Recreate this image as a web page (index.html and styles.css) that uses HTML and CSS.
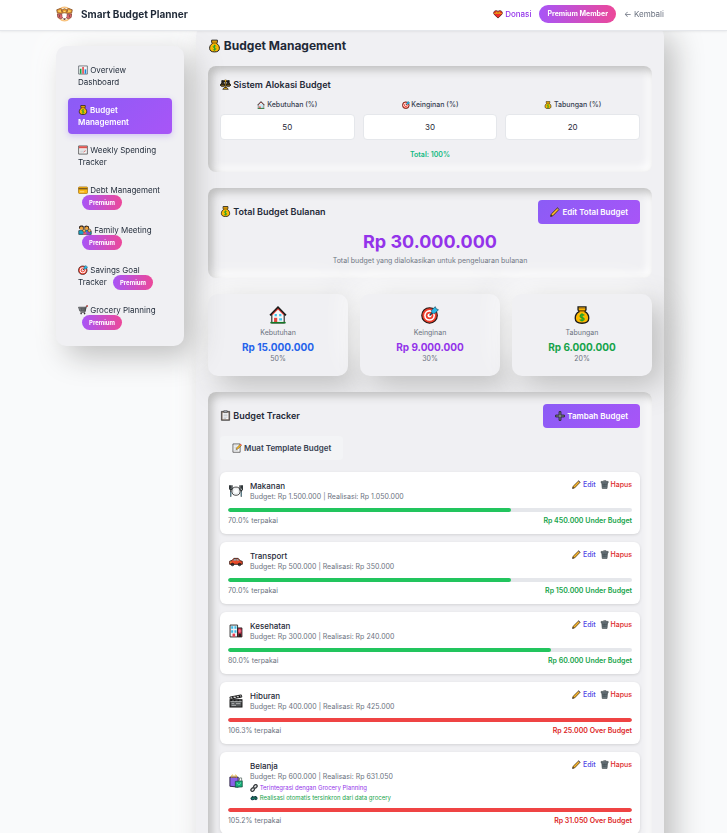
FILE: index.html
```html
<!DOCTYPE html>
<html lang="id">
<head>
<meta charset="utf-8">
<meta name="viewport" content="width=device-width, initial-scale=1">
<title>Smart Budget Planner</title>
<link rel="stylesheet" href="styles.css">
</head>
<body>
<svg class="sprite" aria-hidden="true">
  <symbol id="bag" viewBox="0 0 16 16"><path d="M4.500 .8h7v2.600L10.600 5C13 6.300 14 8.500 14 10.800 14 13.800 12 15.300 8 15.300S2 13.800 2 10.800C2 8.500 3 6.300 5.400 5L4.500 3.400z" fill="#fdb900" stroke="#1b1b1b" stroke-width="1.200"/><path d="M5 4.300h6" stroke="#7a4a00" stroke-width="1.200"/><path d="M5.300 2.200h5.400" stroke="#c98a10"/><path d="M10 8.300C9.500 7.500 6.300 7.300 6.300 9s3.600 1 3.600 2.600-3.200 1.500-3.900.400M8 6.500v7.200" fill="none" stroke="#16a32a" stroke-width="1.100"/></symbol>
  <symbol id="chart" viewBox="0 0 16 16"><path d="M1 1.500h14v13H1z" fill="#f4f6f8" stroke="#555c63" stroke-width="1.200"/><path d="M3 6h2.600v8H3z" fill="#16a34a"/><path d="M6.800 3h2.600v11H6.800z" fill="#e5484d"/><path d="M10.600 7h2.600v7h-2.600z" fill="#1688d8"/></symbol>
  <symbol id="calendar" viewBox="0 0 16 16"><path d="M1 1.500h14v13H1z" fill="#f5f5f5" stroke="#444" stroke-width="1.200"/><path d="M1.500 2h13v3.200h-13z" fill="#e0524c"/><path d="M3.500 8h9M3.500 10.300h9M3.500 12.500h4" stroke="#b4babf" stroke-width=".9"/><path d="M9 12l3-3.500" stroke="#e8433f"/></symbol>
  <symbol id="card" viewBox="0 0 16 16"><rect x=".8" y="3" width="14.400" height="10.500" rx="1.300" fill="#fcb813" stroke="#9a6500"/><path d="M1 5h14v2H1z" fill="#6b5020"/><path d="M3 10.800h7" stroke="#fff0b8"/></symbol>
  <symbol id="family" viewBox="0 0 22 16"><path d="M1 15V9l3-1 4 1 3-1h5l5 2v5z" fill="#16a5c7" stroke="#222"/><path d="M8 15l1-4h4l1 4z" fill="#f04f79"/><path d="M14 15V9l5 1v5z" fill="#7e4bd0"/><path d="M1.500 6V2.500L4 .8h3L9 2v5zM10 6V2l3-1.300L17 2l1 5z" fill="#2c2018"/><circle cx="5.300" cy="5" r="2.600" fill="#efa33a"/><circle cx="13.700" cy="5" r="2.600" fill="#efa33a"/><circle cx="9.600" cy="9" r="2.400" fill="#f8b84e" stroke="#222" stroke-width=".8"/><circle cx="18" cy="9" r="2.400" fill="#f8b84e" stroke="#222" stroke-width=".8"/></symbol>
  <symbol id="target" viewBox="0 0 16 16"><circle cx="7.600" cy="8.400" r="6.900" fill="#ee3e2c" stroke="#241816" stroke-width="1"/><circle cx="7.600" cy="8.400" r="4.800" fill="#fff"/><circle cx="7.600" cy="8.400" r="3.400" fill="#ee3e2c"/><circle cx="7.600" cy="8.400" r="1.800" fill="#fff"/><path d="M7.600 8.400l4-4" stroke="#153a4a" stroke-width="1.300"/><path d="M9.500 6.500V3.500L12.700.6l.8 1.900 2 .8-3 3.200z" fill="#28b9e8" stroke="#164c61" stroke-width=".6"/></symbol>
  <symbol id="cart" viewBox="0 0 16 16"><path d="M15.500 1.500h-2L11 11.500H4" fill="none" stroke="#333" stroke-width="1.400"/><path d="M.8 3.500h11.700l-1.400 6.300H3z" fill="#8b9298" stroke="#333"/><path d="M3 5.500h9M3 7.700h8.500M5 4l1 6M8 4v6M10.500 4l-1 6" stroke="#444" stroke-width=".8"/><circle cx="5" cy="13.700" r="1.300" fill="#333"/><circle cx="10.500" cy="13.700" r="1.300" fill="#333"/><circle cx="14.700" cy="1.700" r="1.300" fill="#d83b35"/></symbol>
  <symbol id="scales" viewBox="0 0 16 16"><path d="M2 3h12M8 1v12" stroke="#1c1a18" stroke-width="2.600"/><path d="M3.800 3L1 9h5.800zM12.200 3L9.200 9H15z" fill="#4a3910" stroke="#1c1a18" stroke-width="1.500"/><path d="M.4 8h6.800c0 4-6.800 4-6.800 0zM8.800 8h6.800c0 4-6.800 4-6.800 0z" fill="#6f541a" stroke="#1c1a18" stroke-width="1"/><path d="M8 3v9" stroke="#c18f1c" stroke-width=".9"/><path d="M4 15l2-2.500h4l2 2.500z" fill="#edb21e" stroke="#1c1a18"/><circle cx="8" cy="2.300" r="1.300" fill="#edb21e"/></symbol>
  <symbol id="house" viewBox="0 0 16 16"><path d="M2.500 7.500L8 2l5.500 5.500V15h-11z" fill="#f7f7f7" stroke="#292929"/><path d="M1 8.400L8 1.200l7 7.200" fill="none" stroke="#191919" stroke-width="1.700"/><path d="M2.700 7.900L8 2.600l5.300 5.300" fill="none" stroke="#e4453e" stroke-width=".9"/><path d="M4.500 10.500h2.800v4.300H4.500z" fill="#e4453e"/><path d="M5 7h2v2H5zM9 7h2v2H9zM9 10.800h2.600v2H9z" fill="#43c5ed"/><path d="M1.200 14.800h13.600" stroke="#147a25" stroke-width="1.300"/></symbol>
  <symbol id="clipboard" viewBox="0 0 16 16"><path d="M2 2h12v13H2z" fill="#79685c" stroke="#333"/><path d="M3.700 3.800h8.600v9.700H3.700z" fill="#fbfbfb"/><path d="M5.500 1h5v2.500h-5z" fill="#aeb4bb" stroke="#333" stroke-width=".8"/><path d="M5 6h6M5 8.200h6M5 10.400h6M5 12.300h4" stroke="#9ba1a8" stroke-width=".8"/></symbol>
  <symbol id="memo" viewBox="0 0 16 16"><path d="M1.500 1.500h11.500v13.300H1.500z" fill="#fafafa" stroke="#444" stroke-width="1.200"/><path d="M3.500 4.500h5M3.500 7h4M3.500 9.500h3M3.500 12h6" stroke="#b3b9bf" stroke-width=".8"/><path d="M6.500 10.500l.6-2.500L13 2l2 2-6 6z" fill="#f9b71b" stroke="#333" stroke-width=".7"/><path d="M12.500 2.500l2 2L15.600 3 14 1.200z" fill="#e85458"/></symbol>
  <symbol id="pencil" viewBox="0 0 16 16"><path d="M1 15l1-3.800L12 1.300l2.600 2.500L4.700 14z" fill="#f5ac16" stroke="#2b231b" stroke-width="1.200"/><path d="M3.500 12.300L12.500 3.300" stroke="#ffd15b" stroke-width=".8"/><path d="M1 15l.6-2.500 1.900 1.900z" fill="#222"/><path d="M10.900 2.500l2.600 2.600 1.300-1.300-2.700-2.500z" fill="#7b6c75"/></symbol>
  <symbol id="trash" viewBox="0 0 16 16"><path d="M3 4h10.500l-1 11H4z" fill="#748087" stroke="#343b3e"/><path d="M2 2.500h12.500V5H2z" fill="#829198" stroke="#343b3e"/><path d="M6 1h4.500v1.500" fill="none" stroke="#343b3e"/><path d="M5.500 6l.6 7M8.200 6v7M11 6l-.6 7M4 8h8.500M4 11h8" stroke="#394347" stroke-width=".8"/></symbol>
  <symbol id="plus" viewBox="0 0 16 16"><path d="M6.500 1h3v5.500H15v3H9.500V15h-3V9.500H1v-3h5.500z" fill="#858c90" stroke="#191d20" stroke-width="1.300"/></symbol>
  <symbol id="gift-heart" viewBox="0 0 16 16"><path d="M8 14.500L2.200 9C-1.300 5.500 4 0 8 4c4-4 9.300 1.500 5.800 5z" fill="#ed2c27" stroke="#431812" stroke-width="1.200"/><path d="M1.500 7.200h13" stroke="#f9bc18" stroke-width="1"/><path d="M5 3.800l3 2.200 3-2.200 1 1.600L8 7.400 4 5.400z" fill="#f9bc18" stroke="#9b5700" stroke-width=".4"/></symbol>
  <symbol id="plate" viewBox="0 0 16 16"><circle cx="8" cy="8.200" r="4.700" fill="#f8fafb" stroke="#333" stroke-width="1"/><circle cx="8" cy="8.200" r="3" fill="#fff" stroke="#d8dcdf" stroke-width=".6"/><path d="M.7 1.500v4.200l1.300 1v8M3.500 1.500v4.200L2 6.700M2 1.500v4M12.500 1.500v5l1.500 1v7.200M15.300 1.500v5L14 7.500M14 1.500v4" fill="none" stroke="#1c2326" stroke-width="1.200"/><path d="M2 9v5M14 9v5" stroke="#6bafc4" stroke-width=".7"/></symbol>
  <symbol id="car" viewBox="0 0 16 16"><path d="M.8 8.200l2.700-.8L5.500 5h5l2.300 2.700 2.400.7v3.400H.8z" fill="#e84a2a" stroke="#3a1710"/><path d="M4.900 7.500L6 6h1.800v1.500zM8.700 6H10l1.500 1.500H8.700z" fill="#65cee8"/><circle cx="4" cy="12" r="1.500" fill="#343434" stroke="#111" stroke-width=".7"/><circle cx="12" cy="12" r="1.500" fill="#343434" stroke="#111" stroke-width=".7"/><path d="M1.200 9.300h1.500" stroke="#ffcf38"/></symbol>
  <symbol id="hospital" viewBox="0 0 16 16"><path d="M1.200 1.200h8.600v13.600H1.200z" fill="#edf3f5" stroke="#222"/><path d="M9.800 4.500h5v10.300h-5z" fill="#c92f4a" stroke="#222"/><path d="M2.500 2.500h2.300v3H2.500zM6.200 2.500h2.300v3H6.200zM2.500 7h2.300v3H2.500zM6.200 7h2.300v3H6.200z" fill="#39b8e6"/><path d="M4 11h3v3.500H4z" fill="#ea4055"/><path d="M12.300 6v4M10.500 8h3.600" stroke="#ff8d9d"/><path d="M10.800 11h3v3.800h-3z" fill="#222"/></symbol>
  <symbol id="clapper" viewBox="0 0 16 16"><path d="M1.200 6.500h13.600v8.300H1.200z" fill="#55595b" stroke="#151515" stroke-width="1.200"/><path d="M1 3.500L14 1l.7 2.500L1.500 6z" fill="#ddd" stroke="#151515"/><path d="M3.500 3l2 2.200M7.500 2.300l2 2.200M11 1.700l2 2M3 6.500l-1 2M7 6.500l-1 2M11 6.500l-1 2" stroke="#151515" stroke-width="1.300"/><path d="M1.500 8.700h13M3 11h3M8 11h5M3 13h5" stroke="#cfd1d2" stroke-width=".8"/></symbol>
  <symbol id="shopping" viewBox="0 0 16 16"><path d="M1 3.500h9.500V15L1 14z" fill="#8a62e8" stroke="#251c3c"/><path d="M3 4.500V2c0-1.300 1.700-1.300 1.700 0v2.500M6.800 4.500V2c0-1.300 1.700-1.300 1.700 0v2.500" fill="none" stroke="#d89d16" stroke-width=".8"/><path d="M7.200 8.500l8-.7v7L7.200 15z" fill="#15ae79" stroke="#174b39" stroke-width=".8"/><path d="M9.300 10c.5 3 3.500 3 4-.3" fill="none" stroke="#9ef0cf" stroke-width=".8"/><path d="M12 7.500V4.500h2.400v3" fill="none" stroke="#31483e" stroke-width=".7"/></symbol>
  <symbol id="link" viewBox="0 0 16 16"><g fill="none" stroke="#3a3e41" stroke-width="2.600"><rect x="7" y="2" width="7.500" height="5.500" rx="2.700" transform="rotate(-45 10.700 4.700)"/><rect x="1.500" y="8.500" width="7.500" height="5.500" rx="2.700" transform="rotate(-45 5.200 11.200)"/></g><path d="M5.500 10.500l5-5" stroke="#80878b" stroke-width="1.500"/></symbol>
  <symbol id="sync" viewBox="0 0 16 16"><path d="M1 8l4-4.500L7.500 5C10 3 13.500 4 15 7.500V10l-3 2.500-3-1.500C6 13.500 3 13 1 9.500z" fill="#123c44"/><path d="M3 8c3 2 7-2 10 1" fill="none" stroke="#27b86c" stroke-width="1.400"/><path d="M4 10.500l3-1.500" stroke="#2c91c8"/></symbol>
  <symbol id="logo" viewBox="0 0 18 16"><circle cx="9" cy="8" r="7.200" fill="#fff3dc" stroke="#f9c27c" stroke-width="1.300"/><path d="M.8 3.500l3.700-1.300L7 3.400l2-1 2 1 2.500-1.200 3.700 1.300-.5 3.200-3.500.8-4.200-.7-4.200.7-3.500-.8z" fill="#e99a33" stroke="#7c4a28" stroke-width=".8"/><path d="M2.500 5h2.800M12.700 5h2.800M8 5.300h2" stroke="#ffe06a" stroke-width="1.200"/><path d="M6 3.700l.7 2.600M12 3.700l-.7 2.600" stroke="#5c3b2a" stroke-width=".8"/><path d="M1.500 8l4.700.2L7 12l-2 1-3-1.300zM11.800 8.200l4.700-.2-.5 3.700-3 1.300-2-1z" fill="#df696d" stroke="#7f3f3e" stroke-width=".8"/><path d="M7 7.700h4l.2 3L9 14l-2.200-3.300z" fill="#fff"/><path d="M8 13h2l-1 1.300zM3.800 9v2.300M14.200 9v2.300" fill="#443" stroke="#693a38" stroke-width=".8"/></symbol>
</svg>

<div class="page">
  <header class="topbar">
    <div class="container topbar-inner">
      <div class="brand"><svg class="logo"><use href="#logo"/></svg><span>Smart Budget Planner</span></div>
      <nav class="top-links">
        <a class="donate" href="#"><svg class="icon"><use href="#gift-heart"/></svg> Donasi</a>
        <span class="member">Premium Member</span>
        <a class="back" href="#">← Kembali</a>
      </nav>
    </div>
  </header>

  <div class="body">
    <div class="container layout">
      <nav class="sidebar">
        <a class="nav-item" href="#"><svg class="icon"><use href="#chart"/></svg> Overview Dashboard</a>
        <a class="nav-item active" href="#"><svg class="icon"><use href="#bag"/></svg> Budget Management</a>
        <a class="nav-item" href="#"><svg class="icon"><use href="#calendar"/></svg> Weekly Spending Tracker</a>
        <a class="nav-item" href="#"><svg class="icon"><use href="#card"/></svg> Debt Management <span class="badge">Premium</span></a>
        <a class="nav-item" href="#"><svg class="icon wide"><use href="#family"/></svg> Family Meeting <span class="badge">Premium</span></a>
        <a class="nav-item" href="#"><svg class="icon"><use href="#target"/></svg> Savings Goal Tracker <span class="badge">Premium</span></a>
        <a class="nav-item" href="#"><svg class="icon"><use href="#cart"/></svg> Grocery Planning <span class="badge">Premium</span></a>
      </nav>

      <main class="content">
        <h1><svg class="icon large"><use href="#bag"/></svg> Budget Management</h1>

        <section class="panel">
          <h2><svg class="icon medium"><use href="#scales"/></svg> Sistem Alokasi Budget</h2>
          <div class="allocation">
            <div class="field"><label for="needs"><svg class="icon small"><use href="#house"/></svg> Kebutuhan (%)</label><input id="needs" type="text" inputmode="numeric" value="50"></div>
            <div class="field"><label for="wants"><svg class="icon small"><use href="#target"/></svg> Keinginan (%)</label><input id="wants" type="text" inputmode="numeric" value="30"></div>
            <div class="field"><label for="savings"><svg class="icon small"><use href="#bag"/></svg> Tabungan (%)</label><input id="savings" type="text" inputmode="numeric" value="20"></div>
          </div>
          <p class="allocation-total">Total: 100%</p>
        </section>

        <section class="panel">
          <div class="panel-head">
            <h2><svg class="icon medium"><use href="#bag"/></svg> Total Budget Bulanan</h2>
            <button class="btn primary" type="button"><svg class="icon"><use href="#pencil"/></svg> Edit Total Budget</button>
          </div>
          <p class="total">Rp 30.000.000</p>
          <p class="caption">Total budget yang dialokasikan untuk pengeluaran bulanan</p>
        </section>

        <div class="summary">
          <div class="stat"><svg class="stat-icon"><use href="#house"/></svg><p>Kebutuhan</p><strong class="blue">Rp 15.000.000</strong><p>50%</p></div>
          <div class="stat"><svg class="stat-icon"><use href="#target"/></svg><p>Keinginan</p><strong class="purple">Rp 9.000.000</strong><p>30%</p></div>
          <div class="stat"><svg class="stat-icon"><use href="#bag"/></svg><p>Tabungan</p><strong class="green">Rp 6.000.000</strong><p>20%</p></div>
        </div>

        <section class="panel">
          <div class="panel-head">
            <h2><svg class="icon medium"><use href="#clipboard"/></svg> Budget Tracker</h2>
            <button class="btn primary" type="button"><svg class="icon"><use href="#plus"/></svg> Tambah Budget</button>
          </div>
          <button class="btn secondary" type="button"><svg class="icon"><use href="#memo"/></svg> Muat Template Budget</button>

          <div class="items">
            <article class="item">
              <div class="item-head">
                <svg class="item-icon"><use href="#plate"/></svg>
                <div class="item-info"><h3>Makanan</h3><p>Budget: Rp 1.500.000 | Realisasi: Rp 1.050.000</p></div>
                <div class="actions"><button class="edit" type="button"><svg class="icon"><use href="#pencil"/></svg> Edit</button><button class="delete" type="button"><svg class="icon"><use href="#trash"/></svg> Hapus</button></div>
              </div>
              <div class="track"><div class="fill" style="width:70%"></div></div>
              <div class="item-foot"><span>70.0% terpakai</span><span class="under">Rp 450.000 Under Budget</span></div>
            </article>
            <article class="item">
              <div class="item-head">
                <svg class="item-icon"><use href="#car"/></svg>
                <div class="item-info"><h3>Transport</h3><p>Budget: Rp 500.000 | Realisasi: Rp 350.000</p></div>
                <div class="actions"><button class="edit" type="button"><svg class="icon"><use href="#pencil"/></svg> Edit</button><button class="delete" type="button"><svg class="icon"><use href="#trash"/></svg> Hapus</button></div>
              </div>
              <div class="track"><div class="fill" style="width:70%"></div></div>
              <div class="item-foot"><span>70.0% terpakai</span><span class="under">Rp 150.000 Under Budget</span></div>
            </article>
            <article class="item">
              <div class="item-head">
                <svg class="item-icon"><use href="#hospital"/></svg>
                <div class="item-info"><h3>Kesehatan</h3><p>Budget: Rp 300.000 | Realisasi: Rp 240.000</p></div>
                <div class="actions"><button class="edit" type="button"><svg class="icon"><use href="#pencil"/></svg> Edit</button><button class="delete" type="button"><svg class="icon"><use href="#trash"/></svg> Hapus</button></div>
              </div>
              <div class="track"><div class="fill" style="width:80%"></div></div>
              <div class="item-foot"><span>80.0% terpakai</span><span class="under">Rp 60.000 Under Budget</span></div>
            </article>
            <article class="item">
              <div class="item-head">
                <svg class="item-icon"><use href="#clapper"/></svg>
                <div class="item-info"><h3>Hiburan</h3><p>Budget: Rp 400.000 | Realisasi: Rp 425.000</p></div>
                <div class="actions"><button class="edit" type="button"><svg class="icon"><use href="#pencil"/></svg> Edit</button><button class="delete" type="button"><svg class="icon"><use href="#trash"/></svg> Hapus</button></div>
              </div>
              <div class="track"><div class="fill exceeded" style="width:100%"></div></div>
              <div class="item-foot"><span>106.3% terpakai</span><span class="over">Rp 25.000 Over Budget</span></div>
            </article>
            <article class="item">
              <div class="item-head">
                <svg class="item-icon"><use href="#shopping"/></svg>
                <div class="item-info"><h3>Belanja</h3><p>Budget: Rp 600.000 | Realisasi: Rp 631.050</p>
                  <p class="note linked"><svg class="icon small"><use href="#link"/></svg> Terintegrasi dengan Grocery Planning</p>
                  <p class="note synced"><svg class="icon small"><use href="#sync"/></svg> Realisasi otomatis tersinkron dari data grocery</p>
                </div>
                <div class="actions"><button class="edit" type="button"><svg class="icon"><use href="#pencil"/></svg> Edit</button><button class="delete" type="button"><svg class="icon"><use href="#trash"/></svg> Hapus</button></div>
              </div>
              <div class="track"><div class="fill exceeded" style="width:100%"></div></div>
              <div class="item-foot"><span>105.2% terpakai</span><span class="over">Rp 31.050 Over Budget</span></div>
            </article>
          </div>
        </section>
      </main>
    </div>
  </div>
</div>
</body>
</html>
```
FILE: styles.css
```css
* { box-sizing: border-box; }

body {
  margin: 0;
  font: 8px/12px Inter, "Liberation Sans", sans-serif;
  color: #1f2937;
  background: #f9fafb;
}

h1, h2, h3, p { margin: 0; }
a { color: inherit; text-decoration: none; }
button, input { font: inherit; color: inherit; }
button { border: 0; background: none; padding: 0; cursor: pointer; white-space: nowrap; }

.sprite { display: none; }

.page {
  height: 100vh;
  overflow: hidden;
}

.topbar, .body { padding-right: 7px; }

.container {
  max-width: 640px;
  margin: 0 auto;
  padding: 0 16px;
}

.icon { width: 10px; height: 10px; vertical-align: -2px; }
.icon.small { width: 8px; height: 8px; }
.icon.medium { width: 11px; height: 11px; }
.icon.large { width: 13px; height: 14px; vertical-align: -3px; }
.icon.wide { width: 14px; }

/* Top bar */
.topbar {
  position: relative;
  z-index: 3;
  background: #fff;
  border-bottom: 1px solid #e5e7eb;
  box-shadow: 0 1px 2px rgba(0, 0, 0, .06);
}
.topbar-inner {
  display: flex;
  align-items: center;
  justify-content: space-between;
  height: 30px;
  padding-bottom: 2px;
}
.brand {
  display: flex;
  align-items: center;
  gap: 8px;
  font-size: 10px;
  font-weight: 700;
}
.logo { width: 17px; height: 16px; }
.top-links { display: flex; align-items: center; gap: 8px; }
.donate { color: #9333ea; font-weight: 500; }
.back { color: #6b7280; }
.member, .badge {
  color: #fff;
  font-weight: 700;
  background: linear-gradient(90deg, #a855f7, #ec4899);
  border-radius: 10px;
}
.member { padding: 4px 8px; font-size: 7px; line-height: 10px; }

/* Page columns */
.layout {
  display: flex;
  align-items: flex-start;
  gap: 12px;
}

.sidebar {
  position: sticky;
  top: 46px;
  z-index: 2;
  flex: 0 0 128px;
  display: flex;
  flex-direction: column;
  gap: 4px;
  margin-top: 15px;
  padding: 12px;
  background: #f0f0f3;
  border-radius: 10px;
  box-shadow: 10px 10px 30px #bebebe, -10px -10px 30px #fff;
}
.nav-item {
  padding: 6px 10px;
  border-radius: 4px;
}
.nav-item.active {
  color: #fff;
  font-weight: 600;
  background: linear-gradient(135deg, #8b5cf6, #a855f7);
  box-shadow: 0 2px 6px rgba(139, 92, 246, .3);
}
.badge {
  margin-left: 4px;
  padding: 4px 7px;
  font-size: 6px;
  line-height: 6px;
  white-space: nowrap;
}

.content {
  flex: 1;
  min-width: 0;
  display: flex;
  flex-direction: column;
  gap: 16px;
  margin-top: -5px;
  padding: 12px;
  background: #f0f0f3;
  border-radius: 10px;
  box-shadow: 10px 10px 30px #bebebe, -10px -10px 30px #fff;
}

h1 { margin-bottom: -4px; font-size: 12px; line-height: 16px; font-weight: 700; }
h2 { font-size: 9px; line-height: 14px; font-weight: 600; }
h3 { font-size: 8px; line-height: 12px; font-weight: 500; color: #1f2937; }

.panel {
  padding: 12px;
  background: #f0f0f3;
  border-radius: 8px;
  box-shadow: inset 4px 4px 8px #bebebe, inset -4px -4px 8px #fff;
}
.panel-head { display: flex; align-items: center; justify-content: space-between; }

.btn {
  padding: 6px 12px;
  border-radius: 4px;
}
.primary {
  color: #fff;
  font-weight: 600;
  background: linear-gradient(135deg, #8b5cf6, #a855f7);
}
.secondary {
  margin-top: 8px;
  color: #374151;
  font-weight: 600;
  background: #f3f4f6;
}

/* Allocation */
.allocation {
  display: grid;
  grid-template-columns: repeat(3, 1fr);
  gap: 8px;
  margin: 8px 0 10px;
}
.field { display: flex; flex-direction: column; gap: 4px; }
.field label {
  color: #374151;
  font-size: 7px;
  line-height: 10px;
  font-weight: 500;
  text-align: center;
}
.field input {
  width: 100%;
  height: 26px;
  padding: 0 6px;
  text-align: center;
  background: #fff;
  border: 1px solid #e5e7eb;
  border-radius: 4px;
}
.allocation-total {
  color: #10b981;
  font-size: 7px;
  line-height: 10px;
  font-weight: 600;
  text-align: center;
}

.total {
  margin: 8px 0 4px;
  color: #9333ea;
  font-size: 18px;
  line-height: 20px;
  font-weight: 700;
  text-align: center;
}
.caption { color: #6b7280; font-size: 7px; line-height: 10px; text-align: center; }

/* Summary cards */
.summary {
  display: grid;
  grid-template-columns: repeat(3, 1fr);
  gap: 12px;
}
.stat {
  display: flex;
  flex-direction: column;
  align-items: center;
  padding: 12px;
  color: #6b7280;
  font-size: 7px;
  line-height: 10px;
  background: #f0f0f3;
  border-radius: 10px;
  box-shadow: 10px 10px 30px #bebebe, -10px -10px 30px #fff;
}
.stat-icon { width: 18px; height: 18px; margin-bottom: 4px; }
.stat strong { margin-top: 2px; font-size: 10px; line-height: 14px; }
.blue { color: #2563eb; }
.purple { color: #9333ea; }
.green { color: #16a34a; }

/* Budget items */
.items { display: flex; flex-direction: column; gap: 8px; margin-top: 12px; }
.item {
  padding: 8px;
  color: #6b7280;
  font-size: 7px;
  line-height: 10px;
  background: #fff;
  border-radius: 6px;
  box-shadow: 0 1px 3px rgba(0, 0, 0, .12);
}
.item-head { display: flex; align-items: center; gap: 6px; }
.item-icon { width: 16px; height: 16px; padding: 1px; }
.item-info { flex: 1; min-width: 0; }
.note { margin-top: 2px; font-size: 6px; line-height: 8px; }
.linked { color: #9333ea; }
.synced { color: #16a34a; }
.actions { display: flex; align-self: flex-start; gap: 4px; font-weight: 500; }
.actions .icon { width: 9px; height: 9px; }
.edit { color: #4f46e5; }
.delete { color: #dc2626; }
.track {
  height: 4px;
  margin: 6px 0 4px;
  background: #e5e7eb;
  border-radius: 2px;
  overflow: hidden;
}
.fill { height: 100%; background: #22c55e; border-radius: 2px; }
.exceeded { background: #ef4444; }
.item-foot { display: flex; justify-content: space-between; }
.under { color: #16a34a; font-weight: 600; }
.over { color: #dc2626; font-weight: 600; }
```
